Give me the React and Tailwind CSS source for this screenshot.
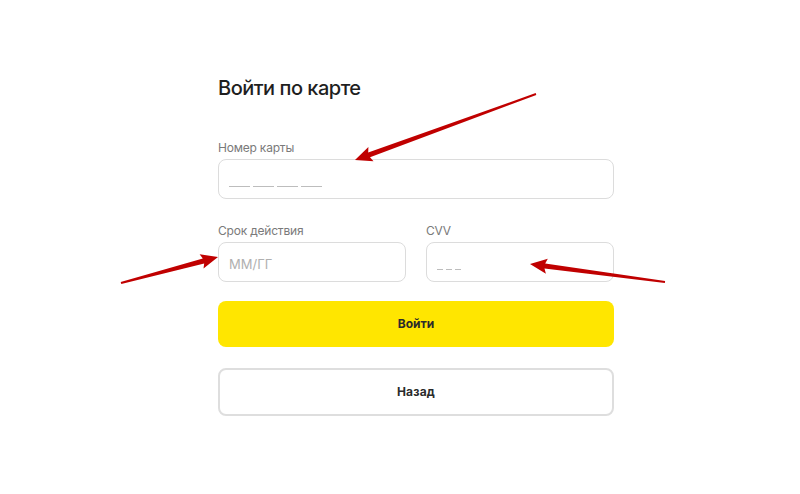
import React from 'react';

const arrows = [
  { from: [536, 94], to: [355, 160] },
  { from: [121, 283], to: [218, 257] },
  { from: [665, 282], to: [530, 264] },
];

const arrowPoints = ({ from, to }) => {
  const [x1, y1] = from;
  const [x2, y2] = to;
  const len = Math.hypot(x2 - x1, y2 - y1);
  const ux = (x2 - x1) / len;
  const uy = (y2 - y1) / len;
  const nx = -uy;
  const ny = ux;
  const head = 15;
  const hw = 7.5;
  const bx = x2 - ux * head;
  const by = y2 - uy * head;
  const pts = [
    [x1 + nx * 1, y1 + ny * 1],
    [bx + nx * 2.6, by + ny * 2.6],
    [bx + nx * hw - ux * 2, by + ny * hw - uy * 2],
    [x2, y2],
    [bx - nx * hw - ux * 2, by - ny * hw - uy * 2],
    [bx - nx * 2.6, by - ny * 2.6],
    [x1 - nx * 1, y1 - ny * 1],
  ];
  return pts.map((p) => p.map((v) => v.toFixed(1)).join(',')).join(' ');
};

// placeholder drawn as dashes (masked input look)
const Dashes = ({ count, width, gap }) => (
  <div className="flex mt-[26px]" style={{ gap }}>
    {Array.from({ length: count }).map((_, i) => (
      <span key={i} className="h-px bg-[#bdbdbd]" style={{ width }} />
    ))}
  </div>
);

const Field = ({ label, children, className = '' }) => (
  <div className={`flex flex-col ${className}`}>
    <label className="text-[12px] leading-[14px] text-[#7a7a7a] mb-[4px] tracking-[-0.2px]">{label}</label>
    <div className="h-[40px] rounded-[8px] border border-[#dcdcdc] bg-white flex items-start px-[10px]">
      {children}
    </div>
  </div>
);

export default function App() {
  return (
    <div
      className="relative w-[800px] h-[494px] bg-white overflow-hidden"
      style={{ fontFamily: 'Inter, "Noto Sans", sans-serif' }}
    >
      <div className="w-[396px] ml-[218px] pt-[75px] flex flex-col">
        <h1 className="text-[20px] leading-[26px] font-medium text-[#1f1f1f] tracking-[-0.5px]">Войти по карте</h1>

        <Field label="Номер карты" className="mt-[40px]">
          <Dashes count={4} width={21} gap={3} />
        </Field>

        <div className="grid grid-cols-2 gap-[20px] mt-[25px]">
          <Field label="Срок действия">
            <span className="text-[13px] leading-[40px] text-[#b0b0b0] mt-[1px]">ММ/ГГ</span>
          </Field>
          <Field label="CVV">
            <Dashes count={3} width={6} gap={3} />
          </Field>
        </div>

        <button className="mt-[19px] h-[46px] rounded-[8px] bg-[#ffe600] text-[12px] font-bold text-[#2b2b2b]">
          Войти
        </button>
        <button className="mt-[21px] h-[48px] rounded-[8px] border-2 border-[#dedede] bg-white text-[12px] font-bold text-[#2b2b2b] tracking-[0.2px]">
          Назад
        </button>
      </div>

      <svg className="absolute inset-0 pointer-events-none" width="800" height="494">
        {arrows.map((a, i) => (
          <polygon key={i} points={arrowPoints(a)} fill="#c00000" />
        ))}
      </svg>
    </div>
  );
}
